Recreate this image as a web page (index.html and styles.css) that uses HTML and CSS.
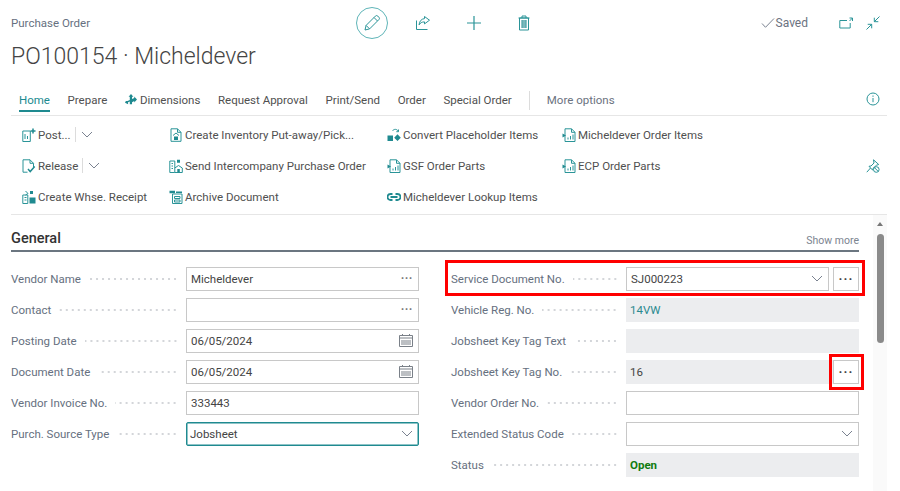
FILE: index.html
```html
<!DOCTYPE html>
<html lang="en">
<head>
<meta charset="utf-8">
<title>Purchase Order</title>
<link rel="stylesheet" href="styles.css">
</head>
<body>
<div class="page">
  <header class="head">
    <div class="top">
      <div class="crumb">Purchase Order</div>
      <div class="tools">
        <span class="edit"><svg width="20" height="20" viewBox="0 0 20 20" class="ic"><path d="M3 17l1.100-4.600L13.400 3.100a1.700 1.700 0 0 1 2.400 0l1.100 1.100a1.700 1.700 0 0 1 0 2.400L7.600 15.900zM12 4.500l3.500 3.500M4.100 12.400l3.500 3.500"/></svg></span>
        <svg width="16" height="16" viewBox="0 0 16 16" class="ic share"><path d="M9.500 1.500l5 3.700-5 3.700V6.900c-2.700 0-4.300 1-5.400 3 .2-3.700 2.300-6 5.400-6.300zM1.500 5.500v9h11"/></svg>
        <svg width="16" height="16" viewBox="0 0 16 16" class="ic plus"><path d="M8 1v14M1 8h14"/></svg>
        <svg width="12" height="16" viewBox="0 0 12 16" class="ic trash"><path d="M.5 3h11M4 3V1h4v2M1.500 3v12h9V3z"/><path class="solid" d="M3.500 5h1.200v8H3.500zM5.400 5h1.200v8H5.400zM7.300 5h1.200v8H7.300z"/></svg>
      </div>
      <div class="status">
        <svg width="14" height="12" viewBox="0 0 14 12" class="chk"><path d="M1 6.500l3.500 3.800L13 1.500"/></svg><span class="saved">Saved</span>
        <svg width="14" height="12" viewBox="0 0 14 12" class="ic popout"><path d="M8 3.500H.8v7.500h10.400V6M10.500 1h3v3"/><path d="M13.500 1L10.500 4"/></svg>
        <svg width="14" height="14" viewBox="0 0 14 14" class="ic collapse"><path d="M13.500.5L8.300 5.700M8.300 1.700v4h4M.5 13.500l5.200-5.200M5.700 12.300v-4h-4"/></svg>
      </div>
    </div>
    <h1 class="title">PO100154 · Micheldever</h1>
    <nav class="tabs">
      <a class="tab on">Home</a>
      <a class="tab">Prepare</a>
      <a class="tab"><svg width="12" height="12" viewBox="0 0 14 14" class="fill"><path d="M7 0l2.800 3.200H8.200v2.700l2.600-1.300V3l3.200 3.400-3.200 3.400V8.100L8.200 9.500V12H5.600V8.800L3.600 9.700v2.300L0 10.300l1-2 2 0 2.600-1.200V3.200H4.200z"/></svg>Dimensions</a>
      <a class="tab">Request Approval</a>
      <a class="tab">Print/Send</a>
      <a class="tab">Order</a>
      <a class="tab">Special Order</a>
      <span class="vsep"></span>
      <a class="tab more">More options</a>
      <svg width="14" height="14" viewBox="0 0 14 14" class="ic info"><circle cx="7" cy="7" r="6"/><path d="M7 6v4.200M7 3.500v1.300"/></svg>
    </nav>
  </header>

  <section class="ribbon">
    <div class="rcol c1">
      <div class="act"><svg width="14" height="14" viewBox="0 0 14 14" class="ic"><path d="M.8 3h7.500v10.500H.8zM3 6v5M5.500 8v3"/><path class="thick" d="M11 .5v5M8.500 3h5"/></svg>Post...<i class="bar"></i><svg width="12" height="7" viewBox="0 0 12 7" class="chev"><path d="M1 1l5 5 5-5"/></svg></div>
      <div class="act"><svg width="14" height="14" viewBox="0 0 14 14" class="ic"><path d="M1 .8h7l3.500 3.500V8M8 .8v3.500h3.500M1 .8v12.400h4.500"/><path class="thick" d="M6 10l2.200 2.500 4.500-5"/></svg>Release<i class="bar"></i><svg width="12" height="7" viewBox="0 0 12 7" class="chev"><path d="M1 1l5 5 5-5"/></svg></div>
      <div class="act"><svg width="14" height="14" viewBox="0 0 14 14" class="ic"><path d="M.8 5h5v8.500h-5zM2.500 7.500h2M2.500 10h2M3.500 1l2.500 2.500L3.500 5"/><path class="solid" d="M7.500 7.500h6v6h-6zM8 1h3v3H8z"/></svg>Create Whse. Receipt</div>
    </div>
    <div class="rcol c2">
      <div class="act"><svg width="14" height="14" viewBox="0 0 14 14" class="ic"><path d="M2 .8h6.500l3.500 3.500v9H2zM8.500.8v3.500H12M4 7.500L7 5l3 2.500"/><path class="solid" d="M5 8.500h4v3.500H5z"/></svg>Create Inventory Put-away/Pick...</div>
      <div class="act"><svg width="14" height="14" viewBox="0 0 14 14" class="ic"><path d="M.8 2h5v11.500h-5zM2.500 4.500h1.500M2.500 7h1.500M2.500 9.500h1.500M5.800 13.500h7.500V9L9.500 6.500 5.800 9"/><path class="solid" d="M8 .8h3v3H8zM8.300 10h2.500v3.500H8.300z"/></svg>Send Intercompany Purchase Order</div>
      <div class="act"><svg width="14" height="14" viewBox="0 0 14 14" class="ic"><path d="M3.500 4h9.500v9.500H3.500zM5.500 6.500h5.500v2H5.500zM5.500 10h5.500v2H5.500z"/><path class="solid" d="M.5.800h5.500v2.500H.5zM7 1.500h6v1.500H7z"/></svg>Archive Document</div>
    </div>
    <div class="rcol c3">
      <div class="act"><svg width="14" height="14" viewBox="0 0 14 14" class="ic"><path d="M5.500 2.800C7 .8 10 .8 11.200 3.300M11.500 1.500v2.200H9.300"/><path class="solid" d="M.5 7.500h5.500V13H.5zM10.500 6.300l3.300 3.400-3.300 3.400-3.300-3.400z"/></svg>Convert Placeholder Items</div>
      <div class="act"><svg width="14" height="14" viewBox="0 0 14 14" class="ic"><path d="M3 .8h6.500L13 4.300v9.200H3zM9.500.8v3.500H13M6 11.500V9.500M8.500 11.500V8M11 11.500V6.500"/><path class="solid" d="M.5 5.500l3.500 2-3.500 2z"/></svg>GSF Order Parts</div>
      <div class="act"><svg width="14" height="8" viewBox="0 0 14 8" class="ic link"><path d="M5.500 1H3.500a3 3 0 0 0 0 6h2M8.500 1h2a3 3 0 0 1 0 6h-2M3.500 4h7"/></svg>Micheldever Lookup Items</div>
    </div>
    <div class="rcol c4">
      <div class="act"><svg width="14" height="14" viewBox="0 0 14 14" class="ic"><path d="M3 .8h6.500L13 4.300v9.200H3zM9.500.8v3.500H13M6 11.500V9.500M8.500 11.500V8M11 11.500V6.500"/><path class="solid" d="M.5 5.500l3.500 2-3.500 2z"/></svg>Micheldever Order Items</div>
      <div class="act"><svg width="14" height="14" viewBox="0 0 14 14" class="ic"><path d="M3 .8h6.500L13 4.300v9.200H3zM9.500.8v3.500H13M6 11.500V9.500M8.500 11.500V8M11 11.500V6.500"/><path class="solid" d="M.5 5.500l3.500 2-3.500 2z"/></svg>ECP Order Parts</div>
    </div>
    <svg width="14" height="14" viewBox="0 0 14 14" class="ic unpin"><path d="M7.500.8l5.200 4.700-2.300.8-3.500 3.200-.2 1.700L3 7.300l2-.3 3-3zM4.500 9L.8 13.200"/><circle cx="10.300" cy="10.500" r="2.800"/><path d="M8.500 8.700l3.600 3.600"/></svg>
  </section>

  <main class="body">
    <div class="content">
      <div class="sechead"><h2>General</h2><span class="showmore">Show more</span></div>
      <div class="cols">
        <div class="col">
          <div class="row"><label>Vendor Name</label><div class="field box">Micheldever<span class="dots">···</span></div></div>
          <div class="row"><label>Contact</label><div class="field box"><span class="dots">···</span></div></div>
          <div class="row"><label>Posting Date</label><div class="field box">06/05/2024<svg width="14" height="13" viewBox="0 0 14 13" class="cal"><path d="M.5 1.500h13v11H.5zM.5 4h13M3.500 0v2M10.500 0v2M3 6v5M5 6v5M7 6v5M9 6v5M11 6v5"/></svg></div></div>
          <div class="row"><label>Document Date</label><div class="field box">06/05/2024<svg width="14" height="13" viewBox="0 0 14 13" class="cal"><path d="M.5 1.500h13v11H.5zM.5 4h13M3.500 0v2M10.500 0v2M3 6v5M5 6v5M7 6v5M9 6v5M11 6v5"/></svg></div></div>
          <div class="row"><label>Vendor Invoice No.</label><div class="field box">333443</div></div>
          <div class="row"><label>Purch. Source Type</label><div class="field box focus">Jobsheet<svg width="12" height="7" viewBox="0 0 12 7" class="chev end"><path d="M1 1l5 5 5-5"/></svg></div></div>
        </div>
        <div class="col">
          <div class="row"><label>Service Document No.</label><div class="field box withbtn">SJ000223<svg width="12" height="7" viewBox="0 0 12 7" class="chev end"><path d="M1 1l5 5 5-5"/></svg></div><button class="more-btn">···</button><span class="mark mark-wide"></span></div>
          <div class="row"><label>Vehicle Reg. No.</label><div class="field ro link-val">14VW</div></div>
          <div class="row"><label>Jobsheet Key Tag Text</label><div class="field ro"></div></div>
          <div class="row"><label>Jobsheet Key Tag No.</label><div class="field ro">16<button class="more-btn over">···</button><span class="mark mark-small"></span></div></div>
          <div class="row"><label>Vendor Order No.</label><div class="field box"></div></div>
          <div class="row"><label>Extended Status Code</label><div class="field box"><svg width="12" height="7" viewBox="0 0 12 7" class="chev end"><path d="M1 1l5 5 5-5"/></svg></div></div>
          <div class="row"><label>Status</label><div class="field ro open">Open</div></div>
        </div>
      </div>
    </div>
    <div class="scroll"><span class="arrow"></span><span class="thumb"></span></div>
  </main>
</div>
</body>
</html>
```
FILE: styles.css
```css
* { box-sizing: border-box; }
html, body { margin: 0; height: 100%; overflow: hidden; }
body { background: #fff; font-family: Roboto, "Open Sans", sans-serif; font-size: 11.500px; color: #505050; }
.page { width: 900px; height: 491px; padding: 0 0 0 11px; overflow: hidden; }
svg { flex: none; display: block; }
.ic { fill: none; stroke: #2a9498; stroke-width: 1; }
.ic .solid, .fill { fill: #1f8a90; stroke: none; }
.ic .thick { stroke-width: 1.500; stroke: #1f8a90; }

.head { width: 876px; }
.top { display: flex; align-items: center; height: 41px; padding-top: 5px; }
.crumb { color: #667080; width: 345px; flex: none; }
.tools { display: flex; align-items: center; }
.edit { width: 32px; height: 32px; flex: none; border: 1px solid #5fb5b8; border-radius: 50%; display: flex; align-items: center; justify-content: center; margin-right: 27px; }
.share { margin-right: 35px; }
.plus { margin-right: 36px; stroke-width: 1.200; }
.status { display: flex; align-items: center; margin-left: auto; padding-right: 7px; }
.chk { fill: none; stroke: #7a8290; stroke-width: 1; margin-right: 1px; }
.saved { color: #6b7280; font-size: 12px; margin-right: 31px; }
.popout { margin-right: 13px; }
.title { margin: 0; font-weight: 300; font-size: 23px; line-height: 32px; color: #444; height: 32px; }

.tabs { display: flex; align-items: center; height: 38px; margin-top: 5px; border-bottom: 1px solid #e6e6e6; padding-left: 8px; padding-top: 7px; }
.tab { display: flex; align-items: center; gap: 3px; height: 24px; margin-right: 17.600px; color: #505050; white-space: nowrap; border-bottom: 2px solid transparent; padding-top: 2px; }
.tab.on { color: #1a8a90; border-bottom-color: #1f8a90; }
.vsep { width: 1px; height: 19px; background: #dcdcdc; margin: 0 16.500px 0 0; }
.tab.more { color: #6b7280; }
.info { margin-left: auto; margin-right: 7px; margin-top: -3px; }

.ribbon { width: 876px; height: 99px; border-bottom: 1px solid #e6e6e6; display: flex; padding: 3px 0 0 11px; position: relative; }
.rcol { display: flex; flex-direction: column; }
.c1 { width: 147px; }
.c2 { width: 218px; }
.c3 { width: 175px; }
.act { display: flex; align-items: center; gap: 2px; height: 31px; white-space: nowrap; color: #505050; }
.bar { width: 1px; height: 15px; background: #dcdcdc; margin: 0 3px 0 2px; }
.chev { fill: none; stroke: #7a8290; stroke-width: 1; }
.link { stroke-width: 1.800; stroke: #1f8a90; }
.unpin { position: absolute; right: 7px; top: 43px; }

.body { display: flex; position: relative; height: 276px; }
.content { width: 848px; }
.sechead { display: flex; align-items: flex-end; justify-content: space-between; height: 37px; border-bottom: 2px solid #6b7680; padding-bottom: 1px; }
.sechead h2 { margin: 0; font-size: 14.500px; font-weight: 500; color: #333; line-height: 20px; }
.showmore { font-size: 10.500px; color: #7c8490; padding-bottom: 2px; }
.cols { display: flex; gap: 32px; padding-top: 11px; }
.col { width: 408px; display: flex; flex-direction: column; }
.row { display: flex; align-items: center; height: 31px; position: relative; }
.row label { width: 167px; margin-right: 8px; flex: none; color: #667080; white-space: nowrap; display: flex; align-items: center; gap: 8px; height: 17px; }
.row label::after { content: ""; flex: 1; height: 2px; background: radial-gradient(circle, #c4c7cc 0.6px, transparent 1px) right center / 6px 2px repeat-x; }
.field { height: 24px; flex: 1; display: flex; align-items: center; padding-left: 4px; color: #444; position: relative; }
.box { background: #fff; border: 1px solid #c8c8c8; }
.ro { background: #ecedef; }
.ro.link-val { color: #2a8a90; }
.open { color: #107c10; font-weight: 700; }
.focus { border-color: #1f8a90; box-shadow: inset 0 0 0 .5px #1f8a90; padding-left: 3px; border-radius: 2px; }
.dots { margin-left: auto; color: #777; font-size: 12px; font-weight: 700; letter-spacing: .5px; padding-right: 5px; }
.cal { margin-left: auto; margin-right: 5px; fill: none; stroke: #7a8088; stroke-width: 1; }
.end { margin-left: auto; margin-right: 5px; }
.withbtn { margin-right: 4px; }
.more-btn { width: 26px; height: 24px; flex: none; background: #fff; border: 1px solid #c8c8c8; padding: 0; font: 700 13px/20px Roboto, sans-serif; color: #444; letter-spacing: 1px; }
.more-btn.over { position: absolute; right: 0; top: 0; }
.mark { position: absolute; border: 3px solid #f00; pointer-events: none; }
.mark-wide { left: -6px; right: -6px; top: -3px; height: 36px; }
.mark-small { right: -5px; top: -6px; width: 35px; height: 36px; }

.scroll { position: absolute; left: 862px; top: 0; width: 14px; height: 276px; background: #fafafa; }
.arrow { position: absolute; left: 4px; top: 7px; border: 3px solid transparent; border-top: 0; border-bottom: 4px solid #777; }
.thumb { position: absolute; left: 4px; top: 19px; width: 7px; height: 109px; border-radius: 4px; background: #8a8a8a; }
```
